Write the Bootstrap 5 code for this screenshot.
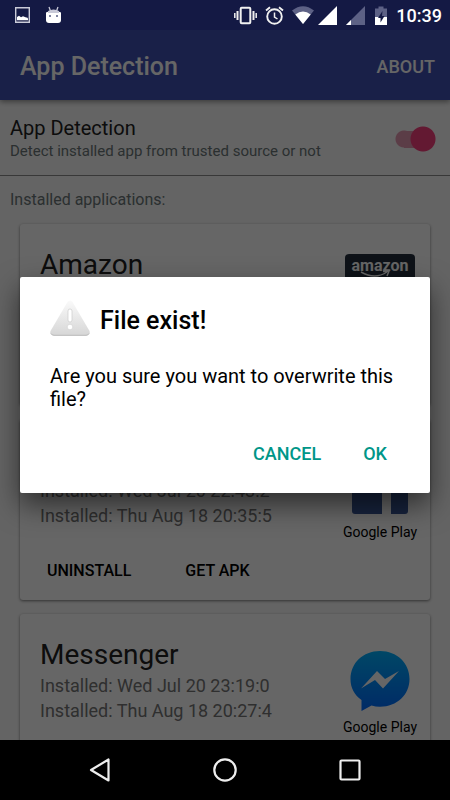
<!DOCTYPE html>
<html lang="en">
<head>
<meta charset="utf-8">
<meta name="viewport" content="width=device-width, initial-scale=1">
<title>App Detection</title>
<link href="https://cdn.jsdelivr.net/npm/bootstrap@5.3.0/dist/css/bootstrap.min.css" rel="stylesheet">
<style>
  body { font-family: Roboto, "Liberation Sans", sans-serif; background: #fafafa; color: #212121; }
  svg { display: block; flex: none; }
  .status-bar { height: 30px; background: #141944; z-index: 3; padding: 0 8px 0 15px; }
  .clock { font-size: 18px; line-height: 20px; font-weight: 500; padding-top: 2px; }
  .app-bar { height: 70px; background: #3f51b5; box-shadow: 0 2px 5px rgba(0,0,0,.4); z-index: 1; padding: 4px 15px 0 20px; }
  .bar-title { font-size: 25px; line-height: 30px; font-weight: 500; }
  .action { font-size: 18px; line-height: 24px; font-weight: 500; }
  .setting { padding: 15px 14px 13px 10px; border-bottom: 1px solid #8c8c8c; }
  .setting-name { font-size: 20px; line-height: 26px; }
  .hint { font-size: 15px; line-height: 21px; color: #6b7778; }
  .toggle { appearance: none; width: 41px; height: 26px; margin: 0; flex: none; border: 0;
    background: radial-gradient(circle at 28px 13px, #f73f7d 12px, transparent 13px),
      linear-gradient(#e398b2, #e398b2) no-repeat 9px 5px / 19px 17px,
      radial-gradient(circle at 9px 13px, #e398b2 8px, transparent 9px); }
  .section-label { font-size: 16px; line-height: 21px; color: #6b7778; padding: 13px 10px 14px; }
  .apps { padding: 0 20px; gap: 14px; }
  .app-card { height: 181px; border: 0; border-radius: 3px; box-shadow: 0 1px 3px rgba(0,0,0,.5); padding: 22px 14px 17px 20px; }
  .app-name { font-size: 28px; line-height: 37px; font-weight: 400; }
  .app-date { font-size: 18px; line-height: 25px; color: #757575; }
  .store { font-size: 14px; line-height: 20px; color: #000; width: 72px; }
  .store-icon { height: 73px; }
  .store-name { white-space: nowrap; }
  .card-actions { gap: 54px; padding-left: 7px; }
  .card-action { font-size: 16px; line-height: 24px; font-weight: 500; color: #000; }
  .scrim { background: rgba(0,0,0,.6); z-index: 2; padding: 0 20px; }
  .dialog-box { border: 0; border-radius: 2px; box-shadow: 0 12px 28px rgba(0,0,0,.55); padding: 23px 30px 17px; color: #000; }
  .dialog-head { gap: 10px; }
  .dialog-title { font-size: 25px; line-height: 42px; font-weight: 500; }
  .dialog-text { font-size: 20px; line-height: 23px; margin: 23px 0 21px; }
  .dialog-actions { gap: 16px; }
  .dialog-actions .btn { font-size: 18px; line-height: 24px; font-weight: 500; color: #009688; padding: 10px 13px; border: 0; }
  .nav-keys { height: 60px; z-index: 3; }
</style>
</head>
<body class="vh-100 d-flex flex-column overflow-hidden">
<div class="status-bar d-flex align-items-center flex-shrink-0 text-white">
  <svg width="15" height="16" viewBox="0 0 15 16"><path d="M.7 .7h13.600v14.600H.7z" fill="none" stroke="#c9cad8" stroke-width="1.400"/><path d="M2 13.200V10l2-1.200 2 1.500 2-1 2.500 1 2 .5 .5 1v1.400z" fill="#fff"/></svg>
  <svg class="ms-3" width="15" height="18" viewBox="0 0 15 18"><path d="M3 1l1.500 4M12 1l-1.500 4" stroke="#c9cad8" stroke-width="1.300"/><path d="M0 6.500Q7.500 2.500 15 6.500V14q0 3-3 3H3q-3 0-3-3z" fill="#fff"/><path d="M2 5Q7.500 2 13 5v2H2z" fill="#c9cad8"/><circle cx="4" cy="10" r="1" fill="#555a80"/><circle cx="11" cy="10" r="1" fill="#555a80"/></svg>
  <div class="d-flex align-items-center ms-auto">
    <svg width="23" height="19" viewBox="0 0 23 19" fill="none" stroke="#f0f0f0"><rect x="6.700" y="1.700" width="9.600" height="15.600" rx="1" stroke-width="2"/><path d="M3.500 5v9M19.500 5v9" stroke-width="2"/><path d="M.8 7v5M22.200 7v5" stroke-width="1.500"/></svg>
    <svg class="ms-2" width="19" height="19" viewBox="0 0 19 19" fill="none" stroke="#f0f0f0" stroke-width="1.900"><circle cx="9.500" cy="10.500" r="7.300"/><path d="M9.500 6.500v4.500l3 2" stroke-width="1.500"/><path d="M1 4.500l4-3.300M18 4.500l-4-3.300"/></svg>
    <svg class="ms-2" width="22" height="18" viewBox="0 0 22 18"><path d="M0 4.500Q11-4 22 4.500L11 18z" fill="#5d6185"/><path d="M3.300 8.500Q11 2.500 18.700 8.500L11 18z" fill="#fff"/></svg>
    <svg class="ms-1" width="20" height="19" viewBox="0 0 20 19"><path d="M19 0v19H0z" fill="#fff"/></svg>
    <svg class="ms-2" width="20" height="19" viewBox="0 0 20 19"><path d="M19 0v19H0z" fill="#5d6185"/><path d="M5 14v5H0z" fill="#fff"/></svg>
    <svg class="ms-2" width="14" height="19" viewBox="0 0 14 19"><path d="M1 2.500h3.500V.5h5v2H13V19H1z" fill="#5d6185"/><path d="M1 11h12v8H1z" fill="#fff"/><path d="M8.500 5L4 12H6.500V16.500L10.500 10H8z" fill="#141944"/></svg>
    <span class="clock ms-2">10:39</span>
  </div>
</div>

<div class="flex-grow-1 position-relative overflow-hidden">
  <header class="app-bar position-relative d-flex align-items-center justify-content-between text-white">
    <h1 class="bar-title m-0">App Detection</h1>
    <button type="button" class="action btn p-0 border-0 text-white">ABOUT</button>
  </header>
  <div class="setting d-flex align-items-center justify-content-between">
    <label for="detect"><span class="setting-name d-block">App Detection</span><span class="hint d-block">Detect installed app from trusted source or not</span></label>
    <input class="toggle" type="checkbox" role="switch" id="detect" checked>
  </div>
  <div class="section-label">Installed applications:</div>
  <main class="apps d-flex flex-column">
    <article class="app-card card flex-shrink-0">
      <div class="d-flex justify-content-between">
        <div><h2 class="app-name m-0">Amazon</h2></div>
        <div class="store pt-2"><div class="store-icon d-flex justify-content-center">
          <svg width="70" height="68" viewBox="0 0 70 68"><rect width="70" height="68" rx="4" fill="#232f3e"/><text x="35" y="17" text-anchor="middle" font-weight="700" font-size="16" fill="#fff">amazon</text><path d="M16 18q14 8 26 0M38 17.500l6-.5-2 5" fill="none" stroke="#fff" stroke-width="1.500"/></svg>
        </div></div>
      </div>
    </article>
    <article class="app-card card flex-shrink-0 justify-content-between">
      <div class="d-flex justify-content-between">
        <div><h2 class="app-name m-0">Facebook</h2><div class="app-date">Installed: Wed Jul 20 22:43:2</div><div class="app-date">Installed: Thu Aug 18 20:35:5</div></div>
        <div class="store d-flex flex-column align-items-center pt-2"><div class="store-icon d-flex align-items-center">
          <svg width="56" height="56" viewBox="0 0 56 56"><rect width="56" height="56" rx="3" fill="#3b5998"/><path d="M30 56V34h-7v-9h7v-6q0-11 11-11h8v9h-6q-4 0-4 4v4h9l-1 9h-8v22z" fill="#fff"/></svg>
        </div><div class="store-name">Google Play</div></div>
      </div>
      <div class="card-actions d-flex"><button type="button" class="card-action btn p-0 border-0">UNINSTALL</button><button type="button" class="card-action btn p-0 border-0">GET APK</button></div>
    </article>
    <article class="app-card card flex-shrink-0">
      <div class="d-flex justify-content-between">
        <div><h2 class="app-name m-0">Messenger</h2><div class="app-date">Installed: Wed Jul 20 23:19:0</div><div class="app-date">Installed: Thu Aug 18 20:27:4</div></div>
        <div class="store d-flex flex-column align-items-center pt-2"><div class="store-icon d-flex align-items-center">
          <svg width="60" height="60" viewBox="0 0 60 60"><defs><linearGradient id="blue" x2="0" y2="1"><stop stop-color="#00b2ff"/><stop offset="1" stop-color="#006aff"/></linearGradient></defs><path d="M30 0C13 0 .5 12 .5 28c0 9 4 16 11 21v11l10-5.500q4 1.200 8.500 1.200c17 0 29.500-12 29.500-27.700S47 0 30 0z" fill="url(#blue)"/><path d="M11 37.500L27 20l8 8 14-8-16 17.500-8-8.500z" fill="#fff"/></svg>
        </div><div class="store-name">Google Play</div></div>
      </div>
    </article>
  </main>

  <div class="scrim position-absolute top-0 start-0 w-100 h-100 d-flex align-items-center">
    <div class="dialog-box card w-100" role="dialog" aria-labelledby="dlgTitle" aria-describedby="dlgText">
      <div class="dialog-head d-flex align-items-start">
        <svg width="40" height="36" viewBox="0 0 40 36"><defs><linearGradient id="grey" x2="0" y2="1"><stop stop-color="#fafafa"/><stop offset="1" stop-color="#d6d6d6"/></linearGradient></defs><path d="M17.500 2q2.500-3 5 0L39.500 31q1 4-3 4.500h-33q-4-.5-3-4.500z" fill="url(#grey)"/><path d="M1 33.500q1 1.800 3 1.800h32q2 0 3-1.800" fill="none" stroke="#bbb"/><rect x="18" y="9" width="4" height="13" rx="2" fill="#fff" stroke="#ccc" stroke-width=".7"/><circle cx="20" cy="27" r="2.800" fill="#fff" stroke="#ccc" stroke-width=".6"/></svg>
        <h2 class="dialog-title m-0" id="dlgTitle">File exist!</h2>
      </div>
      <p class="dialog-text" id="dlgText">Are you sure you want to overwrite this file?</p>
      <div class="dialog-actions d-flex justify-content-end"><button type="button" class="btn">CANCEL</button><button type="button" class="btn">OK</button></div>
    </div>
  </div>
</div>

<nav class="nav-keys bg-black d-flex align-items-center justify-content-center flex-shrink-0" aria-label="System">
  <div class="col-10"><div class="row g-0 align-items-center">
    <div class="col-4 d-flex justify-content-center"><button type="button" class="btn p-0 border-0" aria-label="Back"><svg width="24" height="26" viewBox="0 0 24 26"><path d="M20.500 2.500v21L3 13z" fill="none" stroke="#eee" stroke-width="2.200" stroke-linejoin="round"/></svg></button></div>
    <div class="col-4 d-flex justify-content-center"><button type="button" class="btn p-0 border-0" aria-label="Home"><svg width="24" height="24" viewBox="0 0 24 24"><circle cx="12" cy="12" r="10.700" fill="none" stroke="#eee" stroke-width="2.200"/></svg></button></div>
    <div class="col-4 d-flex justify-content-center"><button type="button" class="btn p-0 border-0" aria-label="Recent apps"><svg width="22" height="22" viewBox="0 0 22 22"><rect x="1.500" y="1.500" width="19" height="19" rx="1" fill="none" stroke="#eee" stroke-width="2.200"/></svg></button></div>
  </div></div>
</nav>
<script src="https://cdn.jsdelivr.net/npm/bootstrap@5.3.0/dist/js/bootstrap.bundle.min.js"></script>
</body>
</html>
